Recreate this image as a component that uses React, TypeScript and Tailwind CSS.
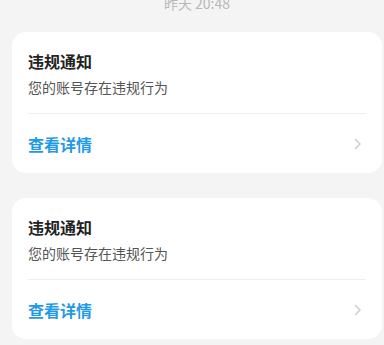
const notices = [
  { title: '违规通知', desc: '您的账号存在违规行为' },
  { title: '违规通知', desc: '您的账号存在违规行为' },
];

function Chevron() {
  return (
    <svg width="8" height="12" viewBox="0 0 8 12" fill="none">
      <path d="M1.5 1.5 L6 6 L1.5 10.5" stroke="#cfcfcf" strokeWidth="1.6" strokeLinecap="round" strokeLinejoin="round" />
    </svg>
  );
}

function NoticeCard({ title, desc }: { title: string; desc: string }) {
  return (
    <div className="bg-white rounded-[14px] px-4">
      <div className="pt-[18px] pb-[16px] border-b border-[#efefef]">
        <div className="text-[16px] leading-[22px] font-bold text-[#222]">{title}</div>
        <div className="mt-[5px] text-[14px] leading-[20px] text-[#555]">{desc}</div>
      </div>
      <div className="flex items-center justify-between h-[59px] pr-[4px]">
        <span className="text-[16px] font-bold text-[#1e9ae6]">查看详情</span>
        <Chevron />
      </div>
    </div>
  );
}

export default function App() {
  return (
    <div className="w-[394px] h-[345px] bg-[#f4f4f4] overflow-hidden" style={{ fontFamily: '"Noto Sans CJK SC", "Noto Sans", sans-serif' }}>
      <div className="h-[32px] flex flex-col">
        <div className="-mt-[6px] text-center text-[14px] leading-[18px] text-[#b8b8b8]">昨天 20:48</div>
      </div>
      <div className="flex flex-col gap-[25px] px-3">
        {notices.map((n, i) => (
          <NoticeCard key={i} title={n.title} desc={n.desc} />
        ))}
      </div>
    </div>
  );
}
